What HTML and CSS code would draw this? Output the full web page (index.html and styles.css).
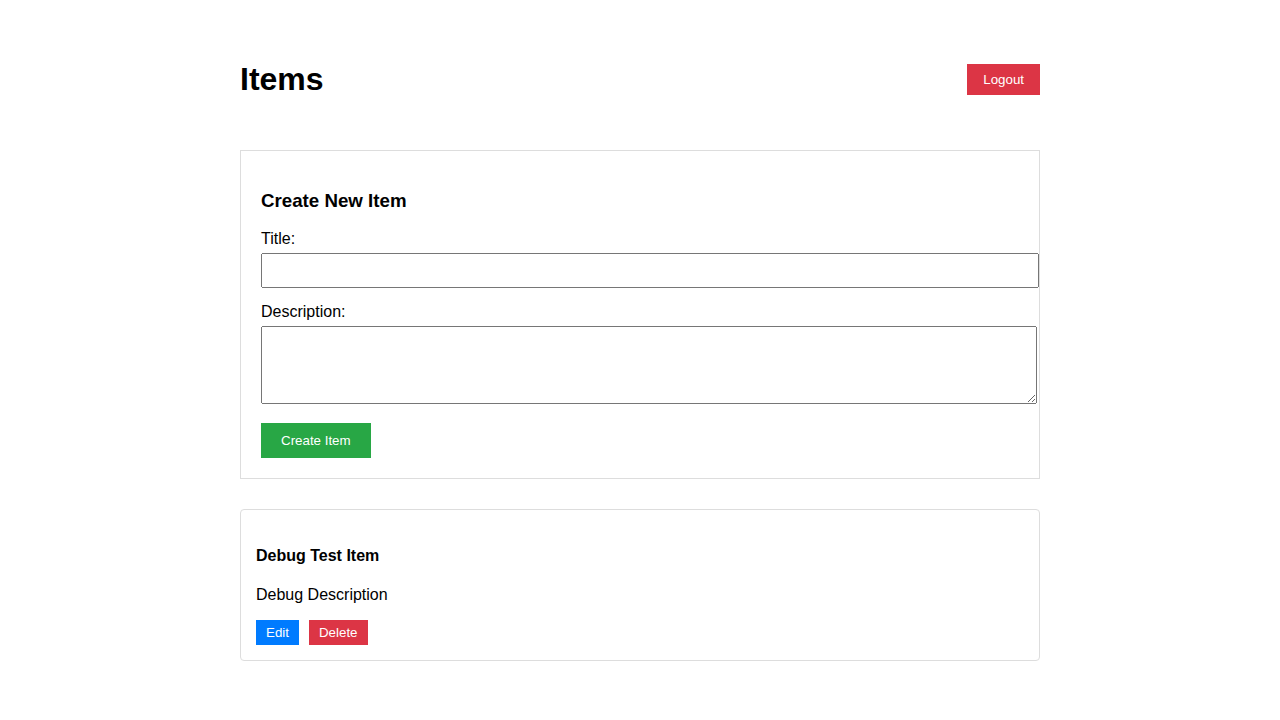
FILE: index.html
```html
<!DOCTYPE html>
<html lang="en">
<head>
<meta charset="utf-8">
<title>Items</title>
<link rel="stylesheet" href="styles.css">
</head>
<body>
<main class="page">
  <header class="header">
    <h1>Items</h1>
    <button type="button" class="btn btn-logout">Logout</button>
  </header>
  <form class="create-form">
    <h3>Create New Item</h3>
    <div class="field">
      <label for="title">Title:</label>
      <input type="text" id="title" class="control">
    </div>
    <div class="field">
      <label for="description">Description:</label>
      <textarea id="description" class="control control-area"></textarea>
    </div>
    <button type="submit" class="btn btn-create">Create Item</button>
  </form>
  <article class="item">
    <h4>Debug Test Item</h4>
    <p>Debug Description</p>
    <div class="actions">
      <button type="button" class="btn btn-edit">Edit</button>
      <button type="button" class="btn btn-delete">Delete</button>
    </div>
  </article>
</main>
</body>
</html>
```
FILE: styles.css
```css
body {
  margin: 0;
  font-family: "Liberation Sans", Arial, sans-serif;
  font-size: 16px;
  color: #000;
  background: #fff;
}

.page {
  max-width: 800px;
  margin: 0 auto;
  padding: 40px 20px;
}

.header {
  display: flex;
  justify-content: space-between;
  align-items: center;
  margin-bottom: 30px;
}

.btn {
  border: none;
  color: #fff;
  font-family: inherit;
  cursor: pointer;
}

.btn-logout {
  padding: 8px 16px;
  background: #dc3545;
}

.create-form {
  margin-bottom: 30px;
  padding: 20px;
  border: 1px solid #ddd;
}

.field {
  margin-bottom: 15px;
}

.field label {
  display: block;
  margin-bottom: 5px;
}

.control {
  width: 100%;
  padding: 8px;
}

.control-area {
  height: 60px;
}

.btn-create {
  padding: 10px 20px;
  background: #28a745;
}

.item {
  padding: 15px;
  border: 1px solid #ddd;
  border-radius: 4px;
}

.actions {
  display: flex;
  gap: 10px;
}

.btn-edit {
  padding: 5px 10px;
  background: #007bff;
}

.btn-delete {
  padding: 5px 10px;
  background: #dc3545;
}
```
